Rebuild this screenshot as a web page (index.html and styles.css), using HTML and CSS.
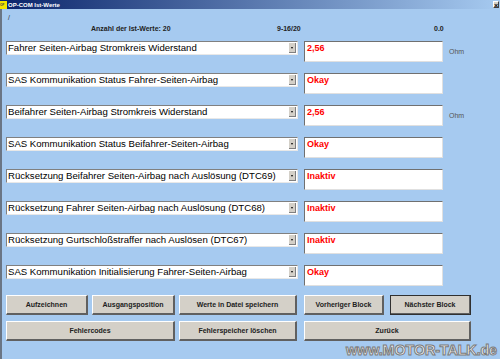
FILE: index.html
```html
<!DOCTYPE html>
<html lang="de">
<head>
    <meta charset="UTF-8">
    <title>OP-COM Ist-Werte</title>
    <link rel="stylesheet" href="styles.css">
</head>
<body>
    <div class="window">
        <div class="titlebar">
            <span class="app-icon">OP</span>
            <span class="title">OP-COM Ist-Werte</span>
            <span class="close">&#215;</span>
        </div>
        <div class="client">
            <div class="slash">/</div>
            <div class="header">
                <span>Anzahl der Ist-Werte: 20</span>
                <span>9-16/20</span>
                <span>0.0</span>
            </div>
            <div class="rows">
                <div class="row">
                    <div class="select">Fahrer Seiten-Airbag Stromkreis Widerstand<span class="arrow"></span></div>
                    <div class="value">2,56</div>
                    <div class="unit">Ohm</div>
                </div>
                <div class="row">
                    <div class="select">SAS Kommunikation Status Fahrer-Seiten-Airbag<span class="arrow"></span></div>
                    <div class="value">Okay</div>
                    <div class="unit"></div>
                </div>
                <div class="row">
                    <div class="select">Beifahrer Seiten-Airbag Stromkreis Widerstand<span class="arrow"></span></div>
                    <div class="value">2,56</div>
                    <div class="unit">Ohm</div>
                </div>
                <div class="row">
                    <div class="select">SAS Kommunikation Status Beifahrer-Seiten-Airbag<span class="arrow"></span></div>
                    <div class="value">Okay</div>
                    <div class="unit"></div>
                </div>
                <div class="row">
                    <div class="select">Rücksetzung Beifahrer Seiten-Airbag nach Auslösung (DTC69)<span class="arrow"></span></div>
                    <div class="value">Inaktiv</div>
                    <div class="unit"></div>
                </div>
                <div class="row">
                    <div class="select">Rücksetzung Fahrer Seiten-Airbag nach Auslösung (DTC68)<span class="arrow"></span></div>
                    <div class="value">Inaktiv</div>
                    <div class="unit"></div>
                </div>
                <div class="row">
                    <div class="select">Rücksetzung Gurtschloßstraffer nach Auslösen (DTC67)<span class="arrow"></span></div>
                    <div class="value">Inaktiv</div>
                    <div class="unit"></div>
                </div>
                <div class="row">
                    <div class="select">SAS Kommunikation Initialisierung Fahrer-Seiten-Airbag<span class="arrow"></span></div>
                    <div class="value">Okay</div>
                    <div class="unit"></div>
                </div>
            </div>
            <div class="buttons">
                <button class="btn">Aufzeichnen</button>
                <button class="btn">Ausgangsposition</button>
                <button class="btn">Werte in Datei speichern</button>
                <button class="btn shift">Vorheriger Block</button>
                <button class="btn default">Nächster Block</button>
                <button class="btn span2">Fehlercodes</button>
                <button class="btn">Fehlerspeicher löschen</button>
                <button class="btn span2 shift">Zurück</button>
            </div>
            <div class="watermark">www.MOTOR-TALK.de</div>
        </div>
    </div>
</body>
</html>
```

FILE: styles.css
```css
body {
    margin: 0;
    font-family: "Liberation Sans", Arial, sans-serif;
    background: #a6caf0;
}
.window {
    width: 500px;
    height: 359px;
    overflow: hidden;
    background: #a6caf0;
}
.titlebar {
    height: 9px;
    display: flex;
    align-items: center;
    background: linear-gradient(to right, #0a246a, #a6caf0);
    color: white;
    font-size: 6px;
    font-weight: bold;
}
.app-icon {
    width: 7px;
    height: 8px;
    background: #f5e600;
    color: #444;
    font-size: 3px;
    line-height: 8px;
    overflow: hidden;
    margin-right: 1px;
}
.title {
    flex: 1;
}
.close {
    width: 6px;
    height: 7px;
    margin-right: 1px;
    background: #d4d0c8;
    color: #000;
    font-size: 7px;
    line-height: 7px;
    text-align: center;
    border-top: 1px solid #fff;
    border-left: 1px solid #fff;
    border-bottom: 1px solid #404040;
    border-right: 1px solid #404040;
    box-sizing: border-box;
}
.client {
    position: relative;
    height: 350px;
    border-left: 2px solid #6a7584;
    box-sizing: border-box;
    padding-left: 4px;
}
.slash {
    height: 11px;
    padding-top: 5px;
    padding-left: 2px;
    font-size: 7px;
    color: #333;
}
.header {
    display: grid;
    grid-template-columns: 186px 157px auto;
    padding-left: 85px;
    height: 16px;
    font-size: 7px;
    font-weight: bold;
    color: #222;
}
.rows {
    display: flex;
    flex-direction: column;
    gap: 11px;
}
.row {
    display: grid;
    grid-template-columns: 292px 139px auto;
    column-gap: 6px;
    height: 21px;
}
.select {
    position: relative;
    height: 14px;
    background: white;
    border-top: 1px solid #808080;
    border-left: 1px solid #808080;
    border-bottom: 1px solid #e8e8e8;
    border-right: 1px solid #e8e8e8;
    box-sizing: border-box;
    font-size: 9.6px;
    line-height: 12px;
    padding-left: 1px;
    color: #000;
    white-space: nowrap;
}
.arrow {
    position: absolute;
    right: 1px;
    top: 1px;
    width: 7px;
    height: 10px;
    background: #d4d0c8;
    border-right: 1px solid #808080;
    border-bottom: 1px solid #808080;
    box-sizing: border-box;
}
.arrow::after {
    content: "";
    position: absolute;
    left: 2px;
    top: 4px;
    border-left: 1px solid transparent;
    border-right: 1px solid transparent;
    border-top: 2px solid #000;
}
.value {
    background: white;
    border-top: 1px solid #707070;
    border-left: 1px solid #707070;
    border-bottom: 1px solid #e0e0e0;
    border-right: 1px solid #e0e0e0;
    box-sizing: border-box;
    color: #ff0000;
    font-size: 9px;
    font-weight: bold;
    padding-left: 2px;
    padding-top: 1px;
}
.unit {
    font-size: 7px;
    color: #555;
    padding-top: 7px;
}
.buttons {
    display: grid;
    grid-template-columns: 82px 83px 118px 83px 83px;
    column-gap: 4px;
    row-gap: 6px;
    margin-top: 9px;
}
.btn {
    height: 20px;
    padding: 0;
    background: #d4d0c8;
    border-top: 1px solid #ffffff;
    border-left: 1px solid #ffffff;
    border-bottom: 2px solid #606060;
    border-right: 2px solid #606060;
    font-family: "Liberation Sans", Arial, sans-serif;
    font-size: 7px;
    font-weight: bold;
    color: #222;
}
.btn.span2 {
    grid-column: span 2;
}
.btn.shift {
    margin-left: 3px;
}
.btn.default {
    margin-left: 2px;
    outline: 1px solid #303030;
    outline-offset: -1px;
}
.watermark {
    position: absolute;
    right: 3px;
    bottom: 0;
    font-size: 14.5px;
    line-height: 17px;
    font-weight: bold;
    color: #f4f4f4;
    -webkit-text-stroke: 1px #7a7a7a;
    letter-spacing: -0.2px;
}
```
